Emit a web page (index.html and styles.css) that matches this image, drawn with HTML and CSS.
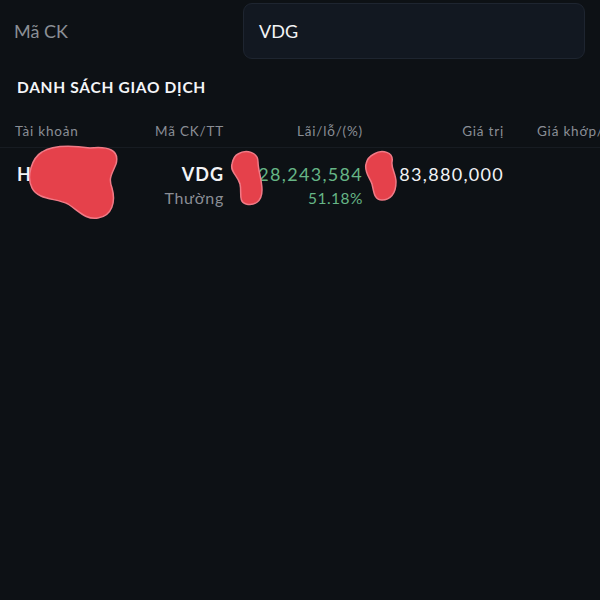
FILE: index.html
```html
<!DOCTYPE html>
<html lang="vi">
<head>
<meta charset="utf-8">
<link rel="stylesheet" href="styles.css">
</head>
<body>
<div class="screen">
  <div class="search-row">
    <div class="search-label">Mã CK</div>
    <div class="search-input">VDG</div>
  </div>
  <div class="section-title">DANH SÁCH GIAO DỊCH</div>
  <div class="table">
    <div class="thead">
      <div class="c1">Tài khoản</div>
      <div class="c2">Mã CK/TT</div>
      <div class="c3">Lãi/lỗ/(%)</div>
      <div class="c4">Giá trị</div>
      <div class="c5">Giá khớp/</div>
    </div>
    <div class="trow">
      <div class="c1"><span class="acct">H</span></div>
      <div class="c2"><div class="sym">VDG</div><div class="sub">Thường</div></div>
      <div class="c3"><div class="pos">28,243,584</div><div class="pos small">51.18%</div></div>
      <div class="c4"><div class="val">83,880,000</div></div>
      <div class="c5"></div>
      <svg class="redact r1" width="92" height="76" viewBox="0 0 92 76"><path d="M14 8 C26 0 48 2 62 4 C80 2 92 6 88 20 C84 30 80 34 84 44 C88 58 84 72 70 74 C58 76 52 68 40 60 C28 54 10 56 4 44 C-2 32 4 14 14 8 Z"/></svg>
      <svg class="redact r2" width="38" height="56" viewBox="0 0 38 56"><path d="M10 4 C18 -1 30 2 30 12 C30 20 34 30 34 40 C34 52 26 56 18 54 C10 52 14 42 12 34 C10 26 2 22 4 14 C5 9 6 6 10 4 Z"/></svg>
      <svg class="redact r3" width="36" height="52" viewBox="0 0 36 52"><path d="M10 4 C18 -1 30 2 28 12 C27 18 32 24 32 32 C32 44 26 50 18 50 C10 50 10 42 8 34 C6 28 0 22 2 14 C3 9 6 6 10 4 Z"/></svg>
    </div>
  </div>
</div>
</body>
</html>
```
FILE: styles.css
```css
html, body {
  margin: 0;
  padding: 0;
  background: #0d1115;
}
body {
  width: 600px;
  height: 600px;
  overflow: hidden;
  font-family: Lato, "Open Sans", sans-serif;
  color: #f2f3f5;
}
.screen {
  display: flex;
  flex-direction: column;
}
.search-row {
  display: flex;
  align-items: center;
  padding: 3px 15px 0 14px;
}
.search-label {
  width: 229px;
  font-size: 18px;
  color: #8b8f96;
}
.search-input {
  flex: 1;
  height: 56px;
  box-sizing: border-box;
  background: #121821;
  border: 1px solid #1e2530;
  border-radius: 9px;
  display: flex;
  align-items: center;
  padding-left: 15px;
  font-size: 18px;
  color: #f2f3f5;
}
.section-title {
  margin: 19px 0 0 17px;
  font-size: 15.5px;
  font-weight: 700;
  letter-spacing: 0.7px;
  color: #f4f5f7;
}
.table {
  margin-top: 27px;
}
.thead, .trow {
  display: grid;
  grid-template-columns: 130px 79px 139px 141px 96px;
  padding-left: 15px;
  position: relative;
}
.thead {
  font-size: 13.5px;
  letter-spacing: 0.8px;
  color: #8a8e95;
  height: 22px;
  border-bottom: 1px solid #171c22;
  padding-bottom: 2px;
}
.trow {
  padding-top: 14px;
}
.c2, .c3, .c4 { text-align: right; }
.c5 { padding-left: 33px; white-space: nowrap; overflow: hidden; }
.acct {
  display: block;
  padding-left: 2px;
  font-size: 18px;
  font-weight: 700;
  line-height: 24px;
}
.sym {
  font-size: 18px;
  font-weight: 700;
  letter-spacing: 1px;
  line-height: 24px;
}
.sub {
  font-size: 16px;
  letter-spacing: 0.7px;
  color: #8a8e95;
  line-height: 24px;
}
.pos {
  font-size: 18px;
  letter-spacing: 1.3px;
  color: #66b586;
  line-height: 24px;
}
.pos.small {
  font-size: 15.5px;
  letter-spacing: 0.5px;
}
.val {
  font-size: 18px;
  letter-spacing: 1.3px;
  line-height: 24px;
  color: #f2f3f5;
}
.redact {
  position: absolute;
  fill: #e5414b;
  stroke: #f07a86;
  stroke-width: 1.5;
}
.r1 { left: 28px; top: -4px; }
.r2 { left: 228px; top: 2px; }
.r3 { left: 364px; top: 2px; }
```
